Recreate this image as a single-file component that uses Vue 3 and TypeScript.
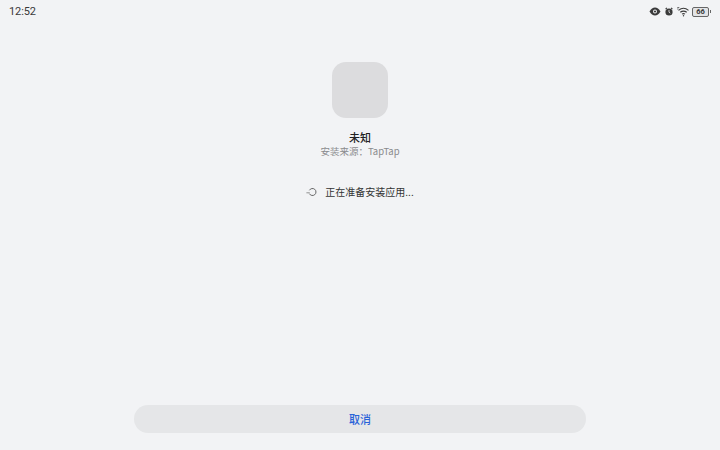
<script setup lang="ts">
const title = '未知'
</script>

<template>
  <div class="page">
    <div class="status">
      <span class="time">12:52</span>
      <div class="icons">
        <svg class="eye" width="12" height="9" viewBox="0 0 12 9"><path d="M0.5 4.500C2 1.800 4 .6 6 .6s4 1.200 5.500 3.900C10 7.200 8 8.400 6 8.400S2 7.200.5 4.500z" fill="#3a3a3a"/><circle cx="6" cy="4.500" r="2" fill="#f2f3f5"/><circle cx="6" cy="4.500" r="1.100" fill="#3a3a3a"/></svg>
        <svg class="alarm" width="8" height="9" viewBox="0 0 8 9"><circle cx="4" cy="5" r="3.600" fill="#3a3a3a"/><path d="M.6 2.200 1.900.8M7.400 2.200 6.100.8" stroke="#3a3a3a" stroke-width="1.100"/><path d="M4 3v2.200l1.300 1" stroke="#f2f3f5" stroke-width=".8" fill="none"/></svg>
        <svg class="wifi" width="12" height="10" viewBox="0 0 12 10" fill="none" stroke="#3a3a3a" stroke-width="1.100"><path d="M1.500 3.300C4.500.8 8.500.8 11.500 3.300M3.300 5.300C5.500 3.600 7.500 3.600 9.700 5.300M5.100 7.200C6 6.400 7 6.400 7.900 7.200"/><circle cx="6.500" cy="8.800" r=".7" fill="#3a3a3a" stroke="none"/><path d="M.3 .6h2M.3 2h1" stroke-width=".8"/></svg>
        <div class="battery"><span class="level">66</span><i class="cap"></i></div>
      </div>
    </div>

    <main class="content">
      <div class="app-icon"></div>
      <div class="name">{{ title }}</div>
      <div class="source">安装来源：TapTap</div>
      <div class="progress">
        <svg class="spinner" width="11" height="10" viewBox="0 0 11 10" fill="none"><path d="M3.400 3.300A3.500 3.500 0 1 1 3.400 6.700" stroke="#555" stroke-width=".9"/><path d="M.4 5.800h3.400" stroke="#888" stroke-width=".9"/></svg>
        <span>正在准备安装应用...</span>
      </div>
    </main>

    <button class="cancel">取消</button>
  </div>
</template>

<style>
html, body { margin: 0; background: #f2f3f5; }
</style>

<style scoped>
.page {
  width: 720px;
  height: 450px;
  box-sizing: border-box;
  display: flex;
  flex-direction: column;
  align-items: center;
  background: #f2f3f5;
  font-family: "Noto Sans CJK SC", "Noto Sans", sans-serif;
  overflow: hidden;
}
.status {
  width: 100%;
  height: 23px;
  box-sizing: border-box;
  padding: 0 9px;
  display: flex;
  justify-content: space-between;
  align-items: center;
}
.time { font: 11px Roboto, sans-serif; letter-spacing: -.1px; color: #3a3a3a; }
.icons { display: flex; align-items: center; }
.eye { margin-right: 4px; }
.alarm { margin-right: 4px; }
.wifi { margin-right: 3px; }
.battery { display: flex; align-items: center; }
.level {
  width: 15px;
  height: 8px;
  border: 1px solid #666;
  border-radius: 2px;
  font: 700 7.500px/8px Roboto, sans-serif;
  color: #3a3a3a;
  text-align: center;
  background: #e2e3e5;
}
.cap { width: 1px; height: 3px; margin-left: 1px; background: #666; }
.content {
  flex: 1;
  display: flex;
  flex-direction: column;
  align-items: center;
  padding-top: 39px;
}
.app-icon {
  width: 56px;
  height: 56px;
  border-radius: 14px;
  background: #dcdcde;
}
.name {
  margin-top: 11px;
  font-size: 11px;
  line-height: 16px;
  font-weight: 500;
  color: #222;
}
.source {
  font-size: 9.500px;
  line-height: 12px;
  color: #8a8b8d;
}
.progress {
  margin-top: 28px;
  display: flex;
  align-items: center;
  gap: 8px;
  font-size: 10px;
  line-height: 14px;
  color: #333;
}
.cancel {
  width: 452px;
  height: 28px;
  margin-bottom: 17px;
  border: 0;
  padding: 0;
  border-radius: 14px;
  background: #e5e6e8;
  color: #2a63d8;
  font: 500 11px "Noto Sans CJK SC", sans-serif;
}
</style>
